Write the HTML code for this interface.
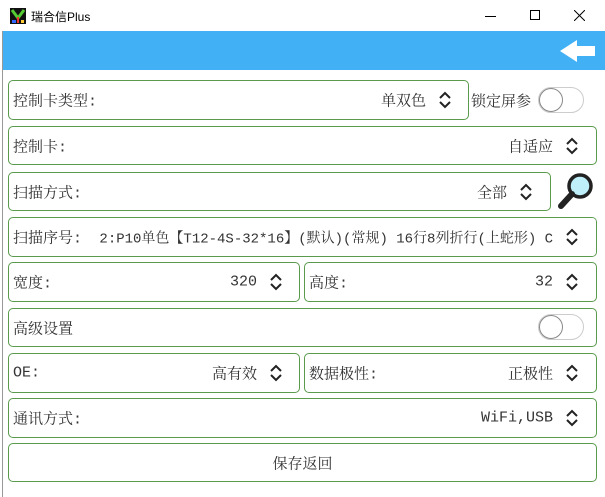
<!DOCTYPE html>
<html><head><meta charset="utf-8"><style>
*{margin:0;padding:0;box-sizing:border-box}
body{width:605px;height:497px;background:#fff;position:relative;overflow:hidden;font-family:"Liberation Mono","Noto Serif CJK SC",serif;font-size:15px;color:#333}
.win{position:absolute;left:2px;top:0;width:603px;height:497px;border-left:1px solid #999;border-top:1px solid #ccc}
.title{position:absolute;left:0;top:0;width:605px;height:31px;background:#fff}
.bar{position:absolute;left:3px;top:31px;width:602px;height:39px;background:#42b0f5}
.box{position:absolute;border:1.5px solid #5a9a4c;border-radius:5px;background:#fff}
.l{position:absolute;left:4px;top:50%;transform:translateY(-50%);white-space:nowrap}
.r{position:absolute;top:50%;transform:translateY(-50%);white-space:nowrap}
.ch{position:absolute;top:50%;transform:translateY(-50%);width:14px;height:18px}
.sw{position:absolute;width:46px;height:26px;border:1px solid #ccc;border-radius:13px;background:#fff}
.sw:before{content:"";position:absolute;left:0;top:0;width:24px;height:24px;border:1.5px solid #888;border-radius:50%;box-sizing:border-box;background:#fff}
</style></head><body>
<div class="win"></div>
<div class="title">
<svg style="position:absolute;left:10px;top:8px" width="16" height="16"><rect width="16" height="16" fill="#111"/><path d="M2 2L8 10L14 2" stroke="#5c3" stroke-width="3" fill="none"/><rect x="7" y="9" width="2" height="6" fill="#e33"/><rect x="2" y="12" width="4" height="3" fill="#36f"/><rect x="11" y="12" width="3" height="3" fill="#fc3"/></svg>
<span style="position:absolute;left:31px;top:8px;font-family:'Liberation Sans','Noto Sans CJK SC',sans-serif;font-size:12px;color:#000">瑞合信Plus</span>
<div style="position:absolute;left:485px;top:16px;width:11px;height:1px;background:#000"></div>
<div style="position:absolute;left:530px;top:10px;width:10px;height:10px;border:1px solid #000"></div>
<svg style="position:absolute;left:574px;top:10px" width="11" height="11"><path d="M0 0L11 11M11 0L0 11" stroke="#000" stroke-width="1"/></svg>
</div>
<div class="bar"><svg style="position:absolute;left:555px;top:8px" width="40" height="24"><path d="M2 12L19 1V7H37V17H19V23Z" fill="#fff"/></svg></div>

<div class="box" style="left:8px;top:80px;width:461px;height:40px"><span class="l">控制卡类型:</span><span class="r" style="right:42px">单双色</span><svg class="ch" style="right:16px" viewBox="0 0 14 18"><path d="M2 7L7 2L12 7M2 11L7 16L12 11" stroke="#222" stroke-width="2" fill="none"/></svg></div>
<span style="position:absolute;left:471px;top:90px">锁定屏参</span>
<div class="sw" style="left:538px;top:87px"></div>

<div class="box" style="left:8px;top:126px;width:589px;height:39px"><span class="l">控制卡:</span><span class="r" style="right:43px">自适应</span><svg class="ch" style="right:17px" viewBox="0 0 14 18"><path d="M2 7L7 2L12 7M2 11L7 16L12 11" stroke="#222" stroke-width="2" fill="none"/></svg></div>

<div class="box" style="left:8px;top:172px;width:543px;height:39px"><span class="l">扫描方式:</span><span class="r" style="right:43px">全部</span><svg class="ch" style="right:17px" viewBox="0 0 14 18"><path d="M2 7L7 2L12 7M2 11L7 16L12 11" stroke="#222" stroke-width="2" fill="none"/></svg></div>
<svg style="position:absolute;left:556px;top:171px" width="40" height="40"><circle cx="24" cy="15" r="11" fill="#bfeff8" stroke="#222" stroke-width="3.5"/><path d="M16 23L5 35" stroke="#222" stroke-width="6" stroke-linecap="round"/></svg>

<div class="box" style="left:8px;top:217px;width:589px;height:40px;overflow:hidden"><span class="l">扫描序号:&nbsp;<span style="font-size:14px"> 2:P10单色【T12-4S-32*16】(默认)(常规) 16行8列折行(上蛇形) C</span></span><div style="position:absolute;right:0;top:0;width:40px;height:100%;background:#fff"></div><svg class="ch" style="right:17px" viewBox="0 0 14 18"><path d="M2 7L7 2L12 7M2 11L7 16L12 11" stroke="#222" stroke-width="2" fill="none"/></svg></div>

<div class="box" style="left:8px;top:262px;width:292px;height:40px"><span class="l">宽度:</span><span class="r" style="right:42px">320</span><svg class="ch" style="right:16px" viewBox="0 0 14 18"><path d="M2 7L7 2L12 7M2 11L7 16L12 11" stroke="#222" stroke-width="2" fill="none"/></svg></div>
<div class="box" style="left:304px;top:262px;width:293px;height:40px"><span class="l">高度:</span><span class="r" style="right:43px">32</span><svg class="ch" style="right:17px" viewBox="0 0 14 18"><path d="M2 7L7 2L12 7M2 11L7 16L12 11" stroke="#222" stroke-width="2" fill="none"/></svg></div>

<div class="box" style="left:8px;top:308px;width:589px;height:39px"><span class="l">高级设置</span></div>
<div class="sw" style="left:538px;top:314px"></div>

<div class="box" style="left:8px;top:353px;width:292px;height:40px"><span class="l">OE:</span><span class="r" style="right:42px">高有效</span><svg class="ch" style="right:16px" viewBox="0 0 14 18"><path d="M2 7L7 2L12 7M2 11L7 16L12 11" stroke="#222" stroke-width="2" fill="none"/></svg></div>
<div class="box" style="left:304px;top:353px;width:293px;height:40px"><span class="l">数据极性:</span><span class="r" style="right:43px">正极性</span><svg class="ch" style="right:17px" viewBox="0 0 14 18"><path d="M2 7L7 2L12 7M2 11L7 16L12 11" stroke="#222" stroke-width="2" fill="none"/></svg></div>

<div class="box" style="left:8px;top:398px;width:589px;height:40px"><span class="l">通讯方式:</span><span class="r" style="right:43px">WiFi,USB</span><svg class="ch" style="right:17px" viewBox="0 0 14 18"><path d="M2 7L7 2L12 7M2 11L7 16L12 11" stroke="#222" stroke-width="2" fill="none"/></svg></div>

<div class="box" style="left:8px;top:443px;width:589px;height:39px"><span class="r" style="left:0;right:0;text-align:center">保存返回</span></div>
</body></html>
